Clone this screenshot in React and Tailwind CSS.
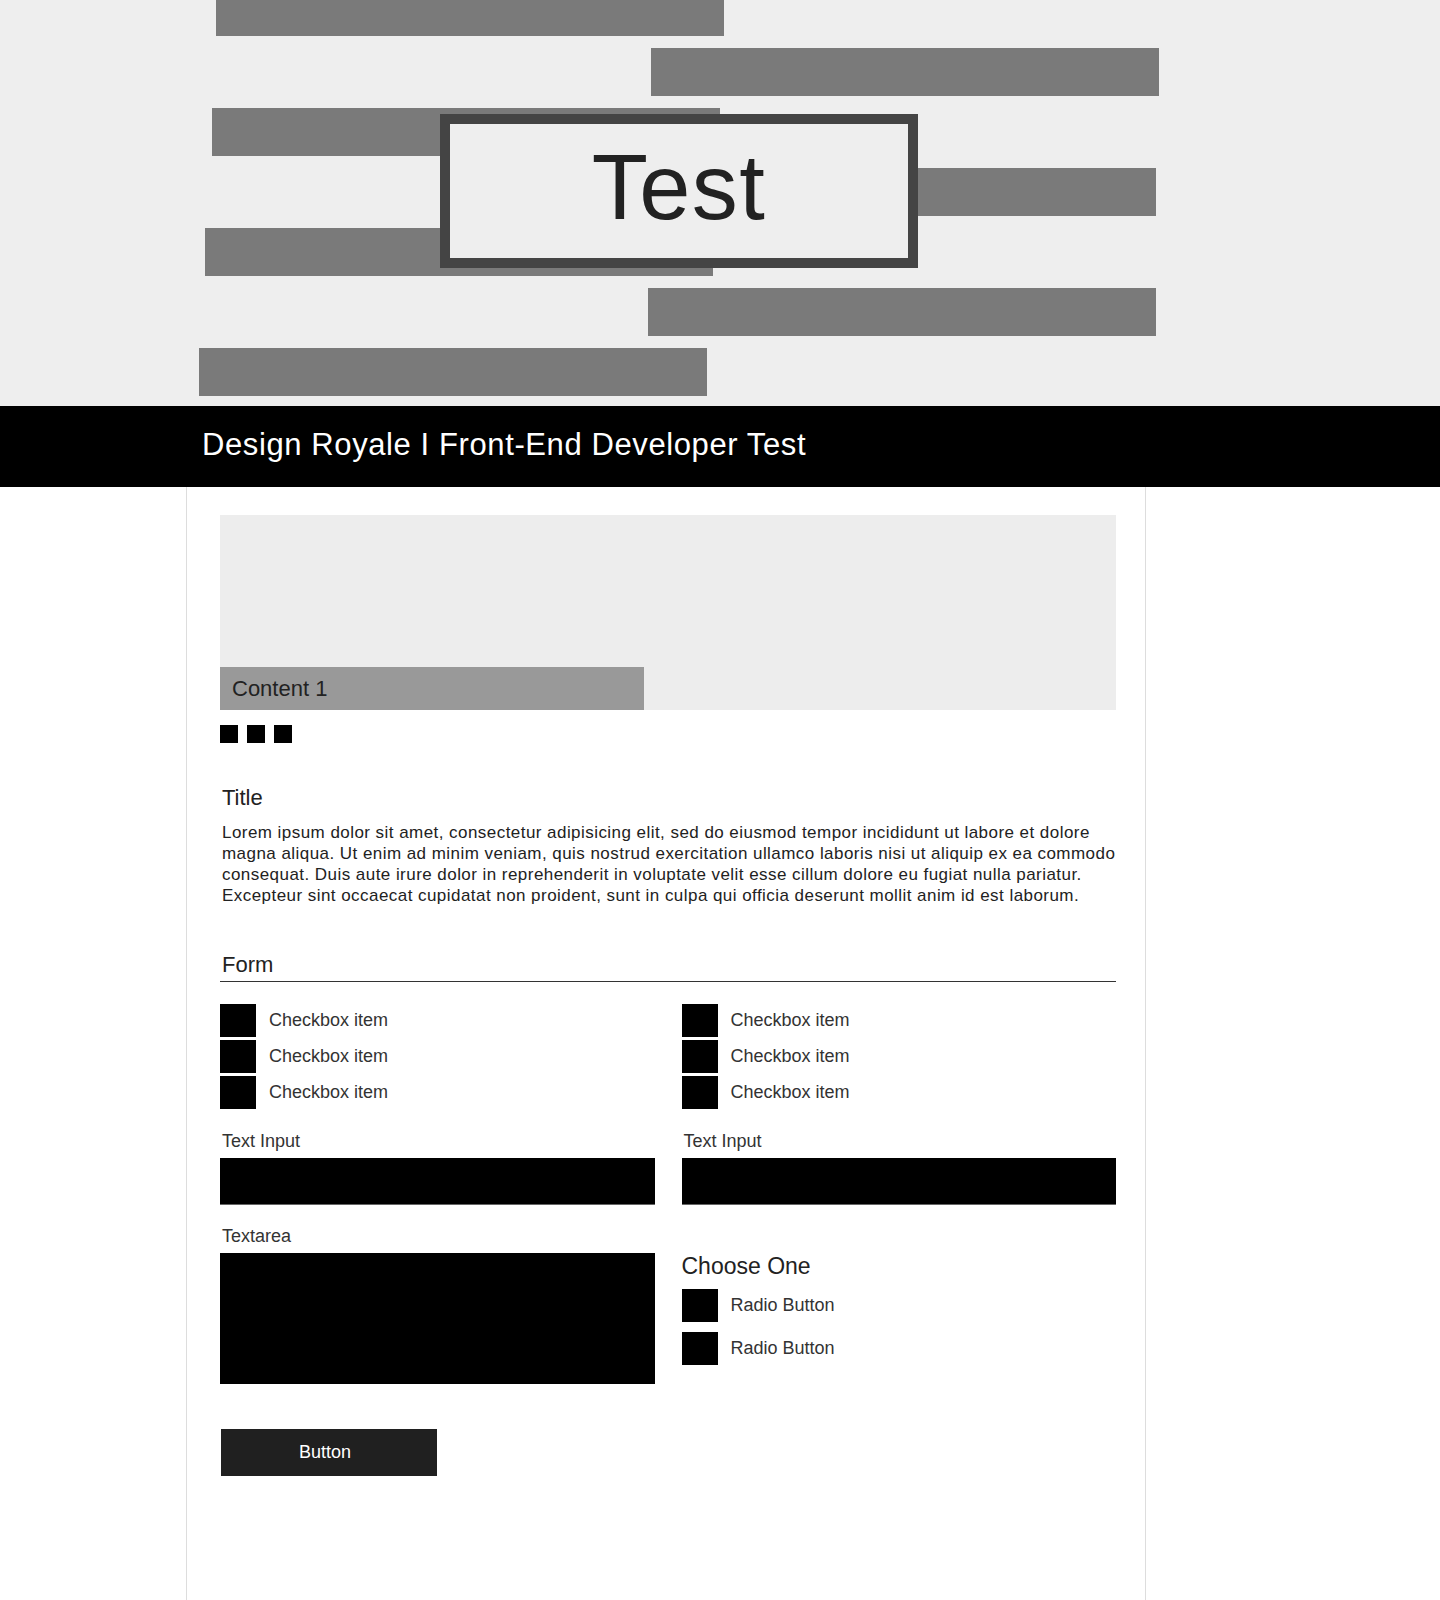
import React from "react";

// barre decorative dell'hero: margine sinistro di ciascuna
const BARS = ["ml-[216px]", "ml-[651px]", "ml-[212px]", "ml-[648px]", "ml-[205px]", "ml-[648px]", "ml-[199px]"];

const LOREM = [
  "Lorem ipsum dolor sit amet, consectetur adipisicing elit, sed do eiusmod tempor incididunt ut labore et dolore",
  "magna aliqua. Ut enim ad minim veniam, quis nostrud exercitation ullamco laboris nisi ut aliquip ex ea commodo",
  "consequat. Duis aute irure dolor in reprehenderit in voluptate velit esse cillum dolore eu fugiat nulla pariatur.",
  "Excepteur sint occaecat cupidatat non proident, sunt in culpa qui officia deserunt mollit anim id est laborum.",
];

function Checkbox({ label }) {
  return (
    <label className="flex items-center h-[33px]">
      <span className="w-[36px] h-[33px] bg-black shrink-0" />
      <span className="ml-[13px] -mt-[2px] text-[18px] leading-[22px] text-[#333]">{label}</span>
    </label>
  );
}

function TextInput({ label }) {
  return (
    <div className="mt-[21px]">
      <div className="pl-[2px] text-[18px] leading-[22px] text-[#333]">{label}</div>
      <div className="mt-[6px] h-[47px] bg-black border-b border-[#666]" />
    </div>
  );
}

export default function App() {
  return (
    <div className="min-h-screen bg-white font-['Liberation_Sans',Arial,sans-serif]">
      {/* Hero */}
      <div className="relative h-[406px] bg-[#eeeeee] overflow-hidden">
        <div className="-mt-[12px] flex flex-col gap-[12px]">
          {BARS.map((ml, i) => (
            <div key={i} className={`${ml} w-[508px] h-[48px] bg-[#7a7a7a]`} />
          ))}
        </div>
        <div className="absolute left-[440px] top-[114px] w-[478px] h-[154px] border-[10px] border-[#444] bg-[#eeeeee] flex items-center justify-center pb-[8px] z-10">
          <span className="text-[92px] leading-[92px] tracking-[1.5px] text-[#222]">Test</span>
        </div>
      </div>

      {/* Header */}
      <div className="h-[81px] bg-black pt-[23px] pl-[202px]">
        <h1 className="text-[31px] leading-[31px] tracking-[0.6px] text-white font-normal">Design Royale I Front-End Developer Test</h1>
      </div>

      {/* Contenuto */}
      <div className="ml-[186px] w-[960px] min-h-[1113px] border-x border-[#dddddd] pl-[33px] pr-[29px] pt-[28px] pb-[40px]">
        <div className="h-[195px] bg-[#ededed] flex flex-col justify-end">
          <div className="w-[424px] h-[43px] bg-[#999999] pl-[12px] text-[22px] leading-[43px] text-[#222]">Content 1</div>
        </div>
        <div className="mt-[15px] flex gap-[9px]">
          <span className="w-[18px] h-[18px] bg-black" />
          <span className="w-[18px] h-[18px] bg-black" />
          <span className="w-[18px] h-[18px] bg-black" />
        </div>

        <h2 className="mt-[42px] pl-[2px] text-[22px] leading-[26px] text-[#222] font-normal">Title</h2>
        <p className="mt-[11px] pl-[2px] text-[17px] leading-[21px] tracking-[0.45px] text-[#222]">
          {LOREM.map((line, i) => (
            <span key={i} className="block whitespace-nowrap">{line}</span>
          ))}
        </p>

        <div className="mt-[46px] border-b border-[#333] pb-[3px]">
          <h2 className="pl-[2px] text-[22px] leading-[26px] text-[#222] font-normal">Form</h2>
        </div>

        <div className="mt-[22px] grid grid-cols-2 gap-x-[27px]">
          <div>
            <div className="flex flex-col gap-[3px]">
              <Checkbox label="Checkbox item" />
              <Checkbox label="Checkbox item" />
              <Checkbox label="Checkbox item" />
            </div>
            <TextInput label="Text Input" />
            <div className="mt-[20px]">
              <div className="pl-[2px] text-[18px] leading-[22px] text-[#333]">Textarea</div>
              <div className="mt-[6px] h-[131px] bg-black" />
            </div>
          </div>
          <div>
            <div className="flex flex-col gap-[3px]">
              <Checkbox label="Checkbox item" />
              <Checkbox label="Checkbox item" />
              <Checkbox label="Checkbox item" />
            </div>
            <TextInput label="Text Input" />
            <div className="mt-[47px]">
              <div className="text-[23px] leading-[28px] text-[#222]">Choose One</div>
              <div className="mt-[9px] flex flex-col gap-[10px]">
                <Checkbox label="Radio Button" />
                <Checkbox label="Radio Button" />
              </div>
            </div>
          </div>
        </div>

        <button className="mt-[45px] ml-[1px] w-[216px] h-[47px] bg-[#202020] text-white text-[18px] pr-[8px]">Button</button>
      </div>
    </div>
  );
}
